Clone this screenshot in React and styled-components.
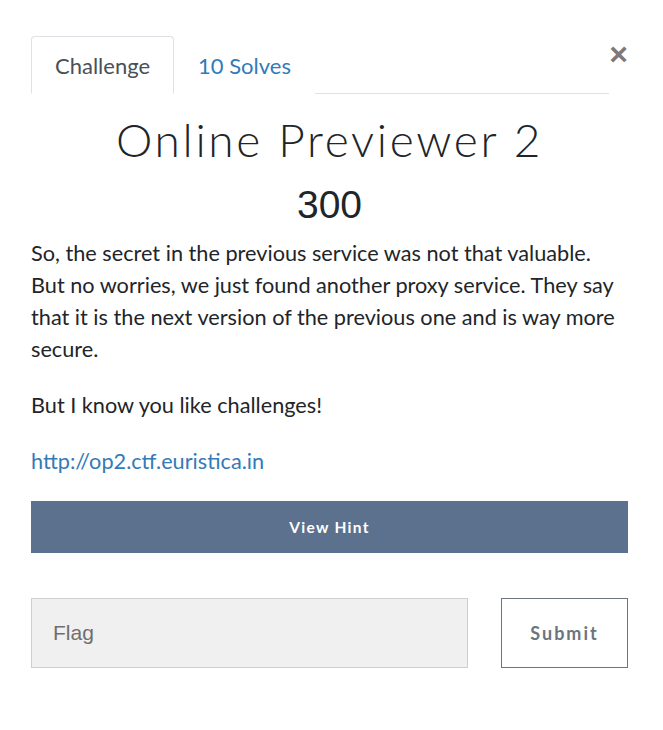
import styled, { createGlobalStyle } from "styled-components";

const Global = createGlobalStyle`
  body {
    margin: 0;
    background: #fff;
    font-family: "Lato", "Liberation Sans", sans-serif;
    color: #212529;
  }
`;

const Modal = styled.div`
  width: 597px;
  padding: 36px 0 0 31px;
`;

const Header = styled.div`
  display: flex;
  align-items: flex-start;
`;

const Tabs = styled.ul`
  display: flex;
  width: 578px;
  margin: 0;
  padding: 0;
  list-style: none;
  border-bottom: 1px solid #dee2e6;
`;

const Tab = styled.li`
  height: 56px;
  padding: 0 23px;
  display: flex;
  align-items: center;
  margin-bottom: -1px;
  font-size: 22px;
  border: 1px solid ${(p) => (p.$active ? "#dee2e6" : "transparent")};
  border-bottom-color: ${(p) => (p.$active ? "#fff" : "transparent")};
  border-radius: 4px 4px 0 0;
  color: ${(p) => (p.$active ? "#495057" : "#337ab7")};
  background: #fff;
`;

const Close = styled.button`
  margin: 8px 0 0 0;
  width: 19px;
  padding: 0;
  border: 0;
  background: none;
  color: #7a7a7a;
  font-family: "Liberation Sans", sans-serif;
  font-size: 32px;
  font-weight: 700;
  line-height: 20px;
`;

const Title = styled.h2`
  margin: 20px 0 0;
  text-align: center;
  font-family: "Lato", sans-serif;
  font-weight: 300;
  font-size: 46px;
  letter-spacing: 2.7px;
  line-height: 52px;
  color: #212529;
`;

const Value = styled.h3`
  margin: 16px 0 9px;
  text-align: center;
  font-family: "Liberation Sans", sans-serif;
  font-weight: 400;
  font-size: 39px;
  line-height: 46px;
  color: #212529;
`;

const Para = styled.p`
  margin: 0 0 24px;
  font-size: 21.7px;
  line-height: 32px;
  color: #212529;
`;

const Link = styled.a`
  color: #337ab7;
  text-decoration: none;
`;

const HintButton = styled.button`
  display: block;
  width: 597px;
  height: 52px;
  border: 0;
  background: #5c718e;
  color: #fff;
  font-family: "Lato", sans-serif;
  font-weight: 700;
  font-size: 15.5px;
  letter-spacing: 1.3px;
`;

const FlagRow = styled.div`
  display: flex;
  justify-content: space-between;
  margin-top: 45px;
`;

const FlagInput = styled.input`
  box-sizing: border-box;
  width: 437px;
  height: 70px;
  padding: 0 21px;
  background: #f0f0f0;
  border: 1px solid #cfcfcf;
  font-family: "Liberation Sans", sans-serif;
  font-size: 21px;
  outline: none;
  &::placeholder {
    color: #6f6f6f;
  }
`;

const SubmitButton = styled.button`
  box-sizing: border-box;
  width: 127px;
  height: 70px;
  background: #fff;
  border: 1px solid #6c757d;
  color: #6c757d;
  font-family: "Lato", sans-serif;
  font-weight: 700;
  font-size: 18px;
  letter-spacing: 2px;
`;

export default function App() {
  return (
    <>
      <Global />
      <Modal>
        <Header>
          <Tabs>
            <Tab $active>Challenge</Tab>
            <Tab>10 Solves</Tab>
          </Tabs>
          <Close aria-label="Close">×</Close>
        </Header>
        <Title>Online Previewer 2</Title>
        <Value>300</Value>
        <Para>
          So, the secret in the previous service was not that valuable. But no
          worries, we just found another proxy service. They say that it is the
          next version of the previous one and is way more secure.
        </Para>
        <Para>But I know you like challenges!</Para>
        <Para>
          <Link href="#">http://op2.ctf.euristica.in</Link>
        </Para>
        <HintButton>View Hint</HintButton>
        <FlagRow>
          <FlagInput placeholder="Flag" />
          <SubmitButton>Submit</SubmitButton>
        </FlagRow>
      </Modal>
    </>
  );
}
